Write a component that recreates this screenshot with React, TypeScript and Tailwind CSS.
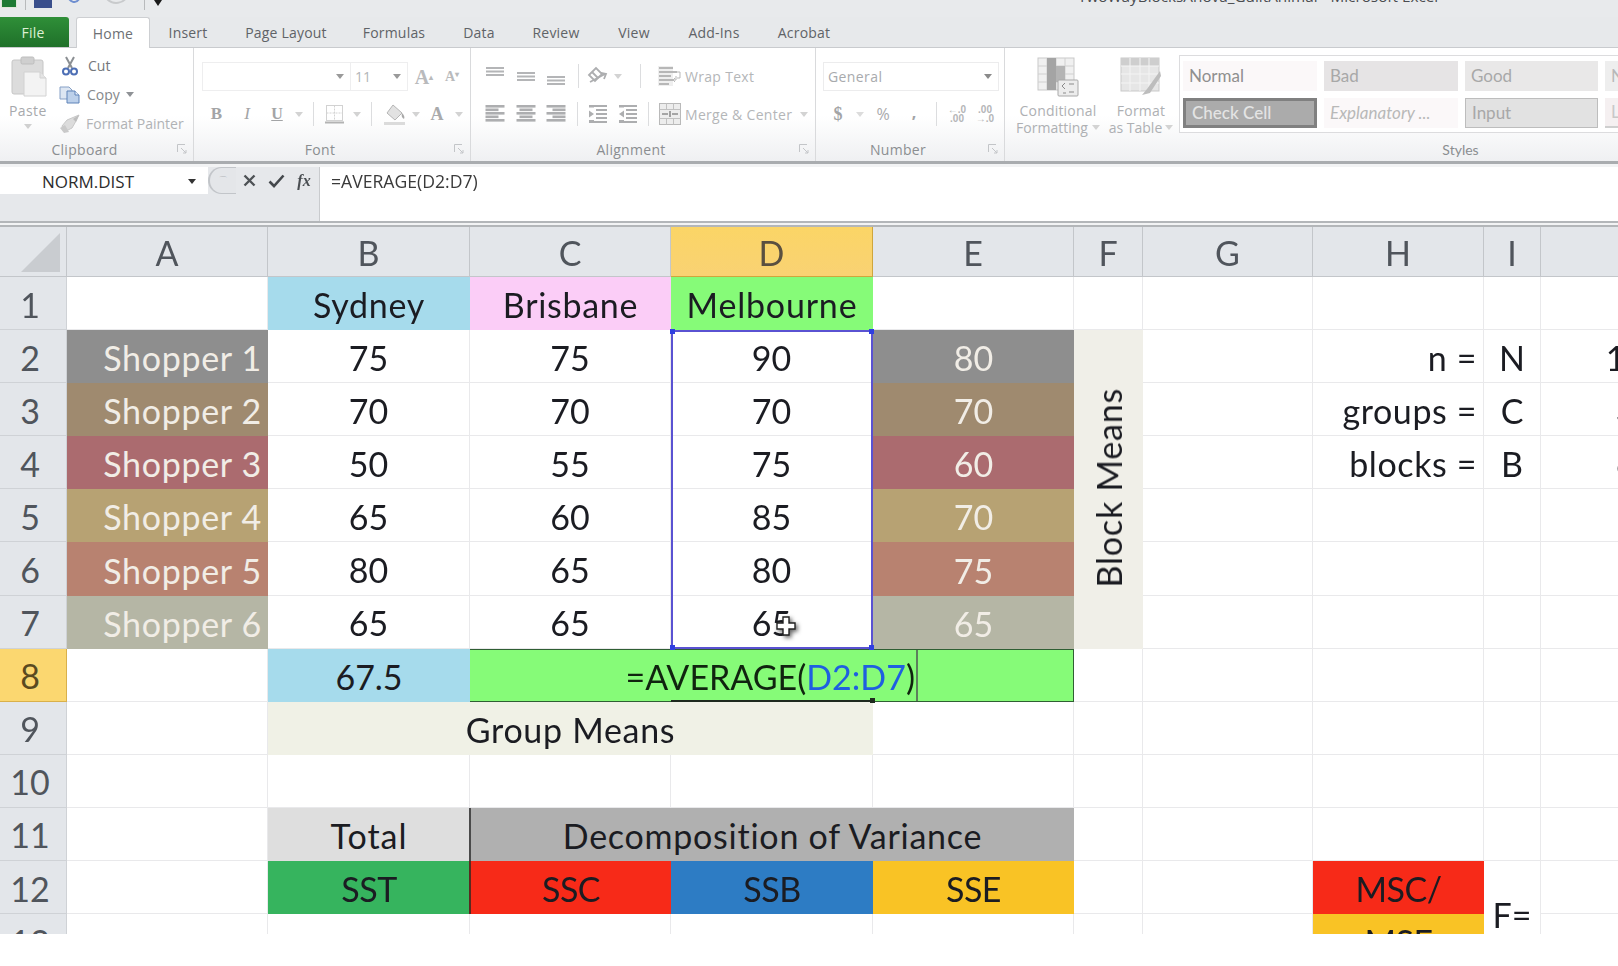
import React from "react";

const Caret = ({ c = "#b9bbbe" }: { c?: string }) => (
  <svg width="8" height="5" viewBox="0 0 8 5"><path d="M0 0h8L4 5z" fill={c} /></svg>
);

const Launcher = () => (
  <svg width="10" height="10" viewBox="0 0 10 10" fill="none" stroke="#c3c5c8">
    <path d="M.5 8V.5H8" /><path d="M4 4l5 5M9 6v3H6" />
  </svg>
);

const Sep = ({ h = "h-[24px]" }: { h?: string }) => <div className={`w-px bg-[#dcdddf] ${h}`} />;

const Slot = ({ w, children }: { w: string; children?: React.ReactNode }) => (
  <div className={`${w} shrink-0 flex items-center justify-center`}>{children}</div>
);

const Group = ({ w, label, children }: { w: string; label: string; children: React.ReactNode }) => (
  <div className={`${w} shrink-0 flex flex-col border-r border-[#d9dadc]`}>
    <div className="flex-1 min-h-0">{children}</div>
    <div className="h-[24px] flex items-center">
      <div className="flex-1 pr-[24px] text-center text-[14px] text-[#8b8e91] tracking-[0.3px]">{label}</div>
      <div className="pr-[6px] -ml-[16px]"><Launcher /></div>
    </div>
  </div>
);

const Bars = ({ kind }: { kind: "top" | "mid" | "bot" }) => {
  const y = kind === "top" ? 0 : kind === "mid" ? 5 : 9;
  return (
    <svg width="20" height="18" viewBox="0 0 20 18" fill="#b4b5b7">
      <rect x="1" y={y} width="18" height="2" /><rect x="1" y={y + 3.5} width="18" height="2" /><rect x="1" y={y + 7} width="18" height="2" />
    </svg>
  );
};

const Para = ({ kind }: { kind: "l" | "c" | "r" }) => {
  const rows = [0, 3.5, 7, 10.5, 14];
  return (
    <svg width="20" height="18" viewBox="0 0 20 18" fill="#adaeb0">
      {rows.map((y, i) => {
        const w = i % 2 === 0 ? 19 : 13;
        const x = kind === "l" ? 0.5 : kind === "c" ? (20 - w) / 2 : 19.5 - w;
        return <rect key={y} x={x} y={y} width={w} height="2.6" />;
      })}
    </svg>
  );
};

const Indent = ({ flip }: { flip?: boolean }) => (
  <svg width="20" height="20" viewBox="0 0 20 20" fill="#adaeb0">
    <rect x="1" y="1" width="5" height="2.5" /><rect x="1" y="16" width="5" height="2.5" />
    <rect x="8" y="5" width="11" height="2" /><rect x="8" y="9" width="11" height="2" /><rect x="8" y="13" width="11" height="2" />
    <rect x="1" y="1" width="18" height="2" /><rect x="1" y="17" width="18" height="2" />
    {flip ? <path d="M1 10l5-3.5v7z" /> : <path d="M6 10L1 6.5v7z" />}
  </svg>
);

const Paste = () => (
  <svg width="36" height="42" viewBox="0 0 36 42">
    <rect x="1" y="4" width="31" height="34" rx="2" fill="#dcdcdc" stroke="#c6c6c6" />
    <rect x="10" y="1" width="13" height="7" rx="1.5" fill="#cfcfcf" stroke="#bdbdbd" />
    <path d="M13 16h16l6 6v18H13z" fill="#f3f3f3" stroke="#d2d2d2" />
    <path d="M29 16v6h6" fill="#e4e4e4" stroke="#d2d2d2" />
  </svg>
);

const Scissors = () => (
  <svg width="16" height="20" viewBox="0 0 16 20" fill="none">
    <path d="M4 1l6 11M12 1L6 12" stroke="#8b8f93" strokeWidth="2" />
    <circle cx="4" cy="15.5" r="3" stroke="#4d6fb5" strokeWidth="2" />
    <circle cx="12" cy="15.5" r="3" stroke="#4d6fb5" strokeWidth="2" />
  </svg>
);

const CopyIcon = () => (
  <svg width="22" height="18" viewBox="0 0 22 18">
    <path d="M1 1h9l3 3v9H1z" fill="#dde6f2" stroke="#86a0c6" />
    <path d="M8 5h8l4 4v8H8z" fill="#bcd0ea" stroke="#5f83b8" />
    <path d="M16 5v4h4" fill="#e8f0fa" stroke="#5f83b8" />
  </svg>
);

const Painter = () => (
  <svg width="22" height="20" viewBox="0 0 22 20">
    <path d="M20 1L8 6 3 12l2 6 8-4 4-7z" fill="#dcdcdc" stroke="#c8c8c8" />
    <path d="M1 14l5-3 4 7-5 1z" fill="#c9c9c9" />
    <path d="M14 5l6-4-3 7z" fill="#bdbdbd" />
  </svg>
);

const BorderIcon = () => (
  <svg width="20" height="20" viewBox="0 0 20 20" fill="none">
    <rect x="1.5" y="1.5" width="16" height="15" stroke="#d2d2d2" />
    <path d="M9.5 1.5v15M1.5 9h16" stroke="#d2d2d2" strokeDasharray="2 1" />
    <path d="M0 18.5h19" stroke="#b3b3b3" strokeWidth="2" />
  </svg>
);

const Fill = () => (
  <svg width="24" height="22" viewBox="0 0 24 22">
    <path d="M10 2l9 8-7 7-8-7z" fill="#e2e2e2" stroke="#b5b5b5" />
    <path d="M19 10c2 2 3 4 2 6-2-1-3-3-2-6z" fill="#a8a8a8" />
    <rect x="1" y="19" width="21" height="3" fill="#dbdbdb" />
  </svg>
);

const Orient = () => (
  <svg width="22" height="22" viewBox="0 0 22 22" fill="none" stroke="#adaeb0" strokeWidth="1.8">
    <path d="M2 10l7-7 6 6-7 7z" />
    <path d="M5 7l6 6" />
    <path d="M3 17l15-8M14 8l5 1-2 5" />
  </svg>
);

const WrapIcon = () => (
  <svg width="24" height="22" viewBox="0 0 24 22" fill="none">
    <rect x="0" y="1" width="15" height="20" fill="#efefef" />
    <path d="M1 3h14M1 7h18M1 11h12M1 15h14M1 19h10" stroke="#b7b7b7" strokeWidth="1.8" />
    <path d="M18 11v4h-2M17 13l-2 2 2 2M19 7h3v6h-3" stroke="#b7b7b7" />
  </svg>
);

const MergeIcon = () => (
  <svg width="22" height="22" viewBox="0 0 22 22" fill="none">
    <rect x=".5" y=".5" width="21" height="21" fill="#ededed" stroke="#b9b9b9" />
    <path d="M.5 6.5h21M.5 15.5h21M7.5.5v6M14.5.5v6M7.5 15.5v6M14.5 15.5v6" stroke="#c1c1c1" />
    <path d="M3 11h6M13 11h6M11 8v6" stroke="#8d8d8d" strokeWidth="1.6" />
  </svg>
);

const DecIcon = ({ flip }: { flip?: boolean }) => (
  <div className="flex flex-col items-center leading-[9px] text-[10px] font-bold text-[#b4b5b7] [font-family:'Liberation_Sans',sans-serif]">
    <span>{flip ? ".00" : "←.0"}</span>
    <span>{flip ? "→.0" : ".00"}</span>
  </div>
);

const CondIcon = () => (
  <svg width="42" height="40" viewBox="0 0 42 40">
    <rect x="1" y="1" width="36" height="32" fill="#f0f0f0" stroke="#c9c9c9" />
    <path d="M10 1v32M19 1v32M28 1v32M1 9h36M1 17h36M1 25h36" stroke="#d0d0d0" />
    <rect x="10" y="1" width="9" height="32" fill="#a4a4a4" />
    <rect x="19" y="9" width="9" height="16" fill="#b4b4b4" />
    <rect x="21" y="23" width="20" height="16" rx="1" fill="#ececec" stroke="#a8a8a8" />
    <path d="M25 29l3-3M25 29l3 3M37 27h-5M32 35h5M26 36h3" stroke="#8a8a8a" fill="none" />
  </svg>
);

const TableIcon = () => (
  <svg width="42" height="40" viewBox="0 0 42 40">
    <rect x="1" y="1" width="38" height="33" fill="#e6e6e6" stroke="#c9c9c9" />
    <rect x="1" y="1" width="38" height="8" fill="#cecece" />
    <path d="M10 1v33M20 1v33M29 1v33M1 9h38M1 17h38M1 26h38" stroke="#f4f4f4" />
    <path d="M40 14L27 32l-5 6 8-2 11-17z" fill="#bdbdbd" />
  </svg>
);

const StyleCell = ({ w, className = "", children }: { w: string; className?: string; children?: React.ReactNode }) => (
  <div className={`${w} h-[30px] shrink-0 flex items-center pl-[6px] text-[17px] overflow-hidden whitespace-nowrap [font-family:Lato,sans-serif] ${className}`}>{children}</div>
);

const tabs: [string, string][] = [
  ["Insert", "w-[76px]"],
  ["Page Layout", "w-[120px]"],
  ["Formulas", "w-[96px]"],
  ["Data", "w-[74px]"],
  ["Review", "w-[80px]"],
  ["View", "w-[76px]"],
  ["Add-Ins", "w-[84px]"],
  ["Acrobat", "w-[96px]"],
];

const Ribbon = () => (
  <div className="h-[113px] shrink-0 flex overflow-hidden bg-[linear-gradient(#ffffff_60%,#eff0f2)] text-[14px] text-[#95989b] [font-family:'Open_Sans',sans-serif]">
    <Group w="w-[194px]" label="Clipboard">
      <div className="flex pl-[11px] pt-[8px]">
        <div className="w-[49px] flex flex-col items-start">
          <Paste />
          <div className="mt-[3px] -ml-[2px] leading-[20px] text-[#a7a9ac] tracking-[0.4px]">Paste</div>
          <div className="ml-[13px] mt-[3px]"><Caret c="#d0d0d0" /></div>
        </div>
        <div className="flex flex-col -mt-[5px] -ml-[1px]">
          <div className="h-[29px] flex items-center gap-[10px] pl-[3px]"><Scissors /><span className="text-[#74777b]">Cut</span></div>
          <div className="h-[29px] flex items-center gap-[6px]"><CopyIcon /><span className="text-[#85888b] font-medium">Copy</span><Caret c="#8f9296" /></div>
          <div className="h-[29px] flex items-center gap-[5px] whitespace-nowrap"><Painter /><span className="text-[#b0b2b5]">Format Painter</span></div>
        </div>
      </div>
    </Group>
    <Group w="w-[277px]" label="Font">
      <div className="flex flex-col pt-[14px] pl-[8px]">
        <div className="flex items-center h-[29px]">
          <div className="w-[149px] h-full border border-[#eeeeef] flex items-center justify-end pr-[6px]"><Caret c="#9a9a9a" /></div>
          <div className="w-[57px] h-full border border-l-0 border-[#eeeeef] flex items-center justify-between pl-[4px] pr-[6px] text-[#b3b5b7]">11<Caret c="#9a9a9a" /></div>
          <Slot w="w-[32px]"><span className="text-[20px] font-bold text-[#b9babc] [font-family:'Liberation_Serif',serif]">A<sup className="text-[8px]">▴</sup></span></Slot>
          <Slot w="w-[24px]"><span className="text-[14px] font-bold text-[#b9babc] [font-family:'Liberation_Serif',serif]">A<sup className="text-[8px]">▾</sup></span></Slot>
        </div>
        <div className="flex items-center h-[26px] mt-[10px] -ml-[1px]">
          <Slot w="w-[31px]"><span className="text-[17px] font-bold text-[#a3a4a6] [font-family:'Liberation_Serif',serif]">B</span></Slot>
          <Slot w="w-[30px]"><span className="text-[17px] italic text-[#a3a4a6] [font-family:'Liberation_Serif',serif]">I</span></Slot>
          <Slot w="w-[30px]"><span className="text-[16px] font-bold underline text-[#a3a4a6] [font-family:'Liberation_Serif',serif]">U</span></Slot>
          <Slot w="w-[14px]"><Caret c="#d3d3d3" /></Slot>
          <Slot w="w-[14px]"><Sep /></Slot>
          <Slot w="w-[30px]"><BorderIcon /></Slot>
          <Slot w="w-[14px]"><Caret c="#d3d3d3" /></Slot>
          <Slot w="w-[14px]"><Sep /></Slot>
          <Slot w="w-[34px]"><Fill /></Slot>
          <Slot w="w-[8px]"><Caret c="#d3d3d3" /></Slot>
          <Slot w="w-[34px]"><span className="text-[18px] font-bold text-[#a9aaac] [font-family:'Liberation_Serif',serif]">A</span></Slot>
          <Slot w="w-[10px]"><Caret c="#d3d3d3" /></Slot>
        </div>
      </div>
    </Group>
    <Group w="w-[345px]" label="Alignment">
      <div className="flex flex-col pt-[13px] pl-[14px]">
        <div className="flex items-center h-[30px]">
          <Slot w="w-[20px]"><Bars kind="top" /></Slot>
          <Slot w="w-[30px] ml-[6px]"><Bars kind="mid" /></Slot>
          <Slot w="w-[30px]"><Bars kind="bot" /></Slot>
          <Slot w="w-[14px]"><Sep /></Slot>
          <Slot w="w-[26px]"><Orient /></Slot>
          <Slot w="w-[14px]"><Caret c="#d3d3d3" /></Slot>
          <Slot w="w-[30px]"><Sep /></Slot>
          <div className="flex items-center gap-[3px] whitespace-nowrap ml-[3px]"><WrapIcon /><span className="text-[#b4b6b8] tracking-[0.3px]">Wrap Text</span></div>
        </div>
        <div className="flex items-center h-[30px] mt-[8px]">
          <Slot w="w-[20px]"><Para kind="l" /></Slot>
          <Slot w="w-[30px] ml-[6px]"><Para kind="c" /></Slot>
          <Slot w="w-[30px]"><Para kind="r" /></Slot>
          <Slot w="w-[12px]"><Sep /></Slot>
          <Slot w="w-[30px]"><Indent /></Slot>
          <Slot w="w-[30px]"><Indent flip /></Slot>
          <Slot w="w-[10px]"><Sep /></Slot>
          <div className="flex items-center gap-[4px] whitespace-nowrap ml-[6px]"><MergeIcon /><span className="text-[#b4b6b8] tracking-[0.3px]">Merge &amp; Center</span><span className="ml-[4px]"><Caret c="#d3d3d3" /></span></div>
        </div>
      </div>
    </Group>
    <Group w="w-[189px]" label="Number">
      <div className="flex flex-col pt-[14px] pl-[7px]">
        <div className="w-[176px] h-[29px] border border-[#ececed] flex items-center justify-between pl-[4px] pr-[6px] text-[#a8aaad] tracking-[0.4px]">General<Caret c="#8a8a8a" /></div>
        <div className="flex items-center h-[26px] mt-[10px]">
          <Slot w="w-[30px]"><span className="text-[18px] font-bold text-[#a3a4a6] [font-family:'Liberation_Serif',serif]">$</span></Slot>
          <Slot w="w-[14px]"><Caret c="#dcdcdc" /></Slot>
          <Slot w="w-[32px]"><span className="text-[16px] text-[#a9aaac]">%</span></Slot>
          <Slot w="w-[30px]"><span className="text-[16px] font-bold text-[#a3a4a6] -mt-[4px]">,</span></Slot>
          <Slot w="w-[14px]"><Sep /></Slot>
          <Slot w="w-[28px]"><DecIcon /></Slot>
          <Slot w="w-[28px]"><DecIcon flip /></Slot>
        </div>
      </div>
    </Group>
    <div className="flex-1 min-w-0 flex flex-col">
      <div className="flex flex-1 min-h-0 overflow-hidden">
        <div className="w-[102px] shrink-0 flex flex-col items-center pt-[9px] pl-[4px]">
          <CondIcon />
          <div className="leading-[17px] mt-[5px] text-[#aeb0b3] text-center whitespace-nowrap tracking-[0.2px]">Conditional</div>
          <div className="leading-[17px] text-[#aeb0b3] whitespace-nowrap flex items-center gap-[4px]">Formatting <Caret c="#d3d3d3" /></div>
        </div>
        <div className="w-[68px] shrink-0 flex flex-col items-center pt-[9px]">
          <TableIcon />
          <div className="leading-[17px] mt-[5px] text-[#aeb0b3] whitespace-nowrap tracking-[0.2px]">Format</div>
          <div className="leading-[17px] text-[#aeb0b3] whitespace-nowrap flex items-center gap-[3px]">as Table <Caret c="#d3d3d3" /></div>
        </div>
        <div className="flex-1 min-w-0 ml-[4px] mt-[7px] h-[78px] border border-r-0 border-[#dcdcde] bg-white flex flex-col gap-[7px] pl-[3px] pt-[5px]">
          <div className="flex gap-[7px]">
            <StyleCell w="w-[134px]" className="bg-[#fbf8f9] text-[#8f8f8f]">Normal</StyleCell>
            <StyleCell w="w-[134px]" className="bg-[#e6e4e5] text-[#a8a8a8]">Bad</StyleCell>
            <StyleCell w="w-[133px]" className="bg-[#e9e8e8] text-[#a8a8a8]">Good</StyleCell>
            <StyleCell w="w-[40px]" className="bg-[#eeeeee] text-[#b8b8b8]">N</StyleCell>
          </div>
          <div className="flex gap-[7px]">
            <StyleCell w="w-[134px]" className="bg-[#ababab] border-[3px] border-[#808080] text-[#e4e4e4] pl-[3px] font-medium">Check Cell</StyleCell>
            <StyleCell w="w-[134px]" className="bg-[#fbf8f9] text-[#b8b8b8] italic">Explanatory ...</StyleCell>
            <StyleCell w="w-[133px]" className="bg-[#e2e2e2] border border-[#bdbdbd] text-[#a8a8a8]">Input</StyleCell>
            <StyleCell w="w-[40px]" className="bg-[#f5f0f1] text-[#c8c8c8] border-b-2 border-[#cfcfcf]">L</StyleCell>
          </div>
        </div>
      </div>
      <div className="h-[24px] flex items-center justify-center text-[14px] text-[#8b8e91] [font-family:Lato,sans-serif] pl-[298px]">Styles</div>
    </div>
  </div>
);

const FormulaBar = () => (
  <div className="h-[54px] shrink-0 flex bg-[#e6e8eb]">
    <div className="w-[320px] shrink-0 border-r border-[#c9cbce]">
      <div className="h-[27px] flex items-center">
        <div className="w-[208px] h-full bg-white flex items-center justify-between pt-[2px] pl-[42px] pr-[12px] text-[17px] text-[#2c2c2c] [font-family:'Open_Sans',sans-serif]">
          NORM.DIST<Caret c="#333333" />
        </div>
        <div className="w-[28px] h-full rounded-l-full border-l-2 border-y border-[#c2c5c9] bg-[#e4e6e9] flex items-center justify-center text-[#b3b6b9] text-[10px]">⌒</div>
        <Slot w="w-[27px]">
          <svg width="13" height="13" viewBox="0 0 13 13" stroke="#4e5256" strokeWidth="2.4"><path d="M1.5 1.5l10 10M11.5 1.5l-10 10" /></svg>
        </Slot>
        <Slot w="w-[27px]">
          <svg width="17" height="14" viewBox="0 0 17 14" fill="none" stroke="#44484c" strokeWidth="2.6"><path d="M1.5 7.5l4.5 4.5L15.5 1.5" /></svg>
        </Slot>
        <Slot w="w-[28px]"><span className="text-[16px] italic font-bold text-[#4a4e52] [font-family:'Liberation_Serif',serif]">fx</span></Slot>
      </div>
    </div>
    <div className="flex-1 bg-white pl-[11px] pt-[3px] text-[17.6px] leading-[22px] text-[#3a3a3a] [font-family:'Open_Sans',sans-serif]">=AVERAGE(D2:D7)</div>
  </div>
);

const gridLine = "border-r border-b border-[#e9e9eb]";

const Cell = ({ className = "", children }: { className?: string; children?: React.ReactNode }) => (
  <div className={`flex items-center justify-center overflow-hidden whitespace-nowrap pt-[2px] ${gridLine} ${className}`}>{children}</div>
);

const Fillc = ({ className = "", children }: { className?: string; children?: React.ReactNode }) => (
  <div className={`flex items-center justify-center overflow-hidden whitespace-nowrap pt-[2px] ${className}`}>{children}</div>
);

const RowH = ({ n, active }: { n: number; active?: boolean }) => (
  <div className={`flex items-center justify-center pr-[6px] pt-[2px] border-r border-b ${active ? "bg-[#fbd770] border-[#d9b04a] text-[#5a4a20]" : "bg-[#e3e6ea] border-[#cfd2d6] text-[#50555c]"}`}>{n}</div>
);

const ColH = ({ l, active }: { l: string; active?: boolean }) => (
  <div className={`flex items-center justify-center pt-[2px] border-r border-b ${active ? "bg-[linear-gradient(#fbd566,#f9d273)] border-[#cfa63c] text-[#5a5040]" : "bg-[#e3e6ea] border-[#c3c6ca] text-[#50555c]"}`}>{l}</div>
);

const shoppers = [
  { name: "Shopper 1", b: 75, c: 75, d: 90, e: 80, bg: "bg-[#8e8e8e]", h: "n =", i: "N", j: "18" },
  { name: "Shopper 2", b: 70, c: 70, d: 70, e: 70, bg: "bg-[#9f8a6f]", h: "groups =", i: "C", j: "3" },
  { name: "Shopper 3", b: 50, c: 55, d: 75, e: 60, bg: "bg-[#ab6b6f]", h: "blocks =", i: "B", j: "6" },
  { name: "Shopper 4", b: 65, c: 60, d: 85, e: 70, bg: "bg-[#b7a273]", h: "", i: "", j: "" },
  { name: "Shopper 5", b: 80, c: 65, d: 80, e: 75, bg: "bg-[#b88270]", h: "", i: "", j: "" },
  { name: "Shopper 6", b: 65, c: 65, d: 65, e: 65, bg: "bg-[#b5b6a5]", h: "", i: "", j: "" },
];

const Blank = ({ n }: { n: number }) => (
  <>
    {Array.from({ length: n }).map((_, i) => <Cell key={i} />)}
  </>
);

const Sheet = () => (
  <div className="relative grid grid-cols-[67px_201px_202px_201px_202px_201px_69px_170px_171px_57px_170px] grid-rows-[50px] auto-rows-[53.1px] text-[34px] text-[#1b1c22] [font-family:Lato,sans-serif]">
    <div className="bg-[#e3e6ea] border-r border-b border-[#c3c6ca] flex items-end justify-end pr-[6px] pb-[4px]">
      <svg width="39" height="39" viewBox="0 0 39 39"><path d="M39 0v39H0z" fill="#c9ccd0" /></svg>
    </div>
    <ColH l="A" /><ColH l="B" /><ColH l="C" /><ColH l="D" active /><ColH l="E" /><ColH l="F" /><ColH l="G" /><ColH l="H" /><ColH l="I" /><ColH l="" />

    <RowH n={1} />
    <Cell />
    <Fillc className="bg-[#a6dbec] tracking-[0.7px]">Sydney</Fillc>
    <Fillc className="bg-[#fbcdf7] tracking-[0.7px]">Brisbane</Fillc>
    <Fillc className="bg-[#86fb78] tracking-[0.8px]">Melbourne</Fillc>
    <Blank n={6} />

    {shoppers.map((s, i) => (
      <React.Fragment key={s.name}>
        <RowH n={i + 2} />
        <Fillc className={`${s.bg} justify-end pr-[6px] text-[#f1ede6] tracking-[0.7px]`}>{s.name}</Fillc>
        <Cell>{s.b}</Cell>
        <Cell>{s.c}</Cell>
        <Cell>{s.d}</Cell>
        <Fillc className={`${s.bg} text-[#f1ede6]`}>{s.e}</Fillc>
        {i === 0 && (
          <Fillc className="row-span-6 bg-[#f0efe8] pb-[6px]">
            <span className="[writing-mode:vertical-rl] rotate-180 tracking-[0.8px]">Block Means</span>
          </Fillc>
        )}
        <Cell />
        <Cell className="justify-end pr-[6px] tracking-[0.6px]">{s.h}</Cell>
        <Cell>{s.i}</Cell>
        <Cell>{s.j}</Cell>
      </React.Fragment>
    ))}

    <RowH n={8} active />
    <Cell />
    <Fillc className="bg-[#a6dbec]">67.5</Fillc>
    <div className="col-span-3 flex bg-[#86fb78] border border-l-0 border-[#2f5f33]">
      <div className="w-[448px] pt-[2px] border-r-2 border-[#5c7f5c] flex items-center justify-end pr-[1px] text-[#10240f] whitespace-nowrap">
        =AVERAGE(<span className="text-[#1f5fe0]">D2:D7</span>)
      </div>
    </div>
    <Blank n={5} />

    <RowH n={9} />
    <Cell />
    <Fillc className="col-span-3 bg-[#f0f1e6] tracking-[0.7px]">Group Means</Fillc>
    <Blank n={6} />

    <RowH n={10} />
    <Blank n={10} />

    <RowH n={11} />
    <Cell />
    <Fillc className="bg-[#dedede] tracking-[1px]">Total</Fillc>
    <Fillc className="col-span-3 bg-[#b0b0b0] border-l-2 border-[#4a4a4a] tracking-[0.75px] -ml-[1px]">Decomposition of Variance</Fillc>
    <Blank n={5} />

    <RowH n={12} />
    <Cell />
    <Fillc className="bg-[#36b45e] tracking-[-0.5px]">SST</Fillc>
    <Fillc className="bg-[#f72a18] border-l-2 border-[#5a2a20] tracking-[-0.5px] -ml-[1px]">SSC</Fillc>
    <Fillc className="bg-[#2d7cc4] tracking-[-0.5px]">SSB</Fillc>
    <Fillc className="bg-[#f9c325] tracking-[-0.5px]">SSE</Fillc>
    <Blank n={2} />
    <div className="row-span-2 flex flex-col">
      <Fillc className="h-[53px] shrink-0 bg-[#f72a18] tracking-[-0.5px]">MSC/</Fillc>
      <Fillc className="flex-1 bg-[#f9c325] tracking-[-0.5px]">MSE</Fillc>
    </div>
    <Cell className="row-span-2">F=</Cell>
    <Cell />

    <RowH n={13} />
    <Blank n={7} />
    <Cell />

    <div className="absolute inset-0 col-start-5 col-end-6 row-start-3 row-end-9 border-2 border-[#5a52d2] pointer-events-none">
      <div className="absolute -left-[3px] -top-[3px] size-[5px] bg-[#2f3fe0]" />
      <div className="absolute -right-[3px] -top-[3px] size-[5px] bg-[#2f3fe0]" />
      <div className="absolute -left-[3px] -bottom-[3px] size-[5px] bg-[#2f3fe0]" />
      <div className="absolute -right-[3px] -bottom-[3px] size-[5px] bg-[#2f3fe0]" />
      <svg className="absolute left-[103px] top-[284px] drop-shadow-[2px_2px_2px_rgba(0,0,0,0.6)]" width="20" height="20" viewBox="0 0 20 20">
        <path d="M7 1h6v6h6v6h-6v6H7v-6H1V7h6z" fill="#ffffff" stroke="#222222" strokeWidth="1.4" />
      </svg>
    </div>
    <div className="absolute left-0 right-0 bottom-0 h-[2px] col-start-5 col-end-6 row-start-9 row-end-10 bg-[#1e2a1e] pointer-events-none">
      <div className="absolute -right-[2px] -bottom-[1px] size-[5px] bg-[#1e2a1e]" />
    </div>
  </div>
);

export default function App() {
  return (
    <div className="w-[1618px] h-[966px] bg-white overflow-hidden">
      <div className="h-[934px] overflow-hidden flex flex-col blur-[0.5px]">
        <div className="h-[17px] shrink-0 bg-[#e8eaec] overflow-hidden relative flex items-start">
          <div className="flex items-start -mt-[8px] h-[16px] w-full">
            <div className="ml-[1px] w-[16px] h-[16px] bg-[#1e7a34] border border-[#dfe7d8]" />
            <div className="ml-[8px] w-px h-[18px] bg-[#b8babc]" />
            <div className="ml-[8px] w-[18px] h-[16px] bg-[#3a4f8c]" />
            <svg className="ml-[12px] mt-[1px]" width="18" height="12" viewBox="0 0 18 12" fill="none" stroke="#6f8fd0" strokeWidth="2"><path d="M3 2c3 8 9 9 12 4" /></svg>
            <div className="ml-[8px] w-[5px] h-[14px]" />
            <svg className="ml-[8px] mt-[2px]" width="28" height="12" viewBox="0 0 28 12" fill="none" stroke="#c8cacc" strokeWidth="2"><path d="M24 2C21 10 10 11 4 5" /></svg>
            <div className="ml-[13px] w-px h-[18px] bg-[#b8babc]" />
            <svg className="ml-[7px] mt-[5px]" width="12" height="9" viewBox="0 0 12 9"><path d="M0 0h12L6 9z" fill="#1a1a1a" /></svg>
            <div className="ml-[914px] mt-[-3px] text-[15.3px] leading-[14px] text-[#4a4c50] whitespace-nowrap [font-family:'Open_Sans',sans-serif]">TwoWayBlocksAnova_GuiltAnimal - Microsoft Excel</div>
          </div>
        </div>
        <div className="h-[31px] shrink-0 flex items-end bg-[#e7e9eb] border-b border-[#c9cbce] text-[14px] text-[#5f6367] tracking-[0.2px] [font-family:'Open_Sans',sans-serif]">
          <div className="w-[69px] h-[30px] pr-[3px] rounded-tr-[3px] bg-[linear-gradient(#2f8f38,#1f7029)] flex items-center justify-center text-[#dff0d4] font-medium">File</div>
          <div className="w-[74px] h-[31px] ml-[7px] -mb-px bg-white border border-b-0 border-[#cdcfd2] rounded-t-[3px] flex items-center justify-center text-[#6d7074]">Home</div>
          {tabs.map(([t, w]) => (
            <div key={t} className={`${w} h-[30px] flex items-center justify-center whitespace-nowrap`}>{t}</div>
          ))}
        </div>
        <Ribbon />
        <div className="h-[6px] shrink-0 bg-[#f2f3f4] border-t-[3px] border-[#a9acaf]" />
        <FormulaBar />
        <div className="h-[6px] shrink-0 bg-[#f2f3f4] border-y-2 border-[#b3b6b9]" />
        <Sheet />
      </div>
    </div>
  );
}
